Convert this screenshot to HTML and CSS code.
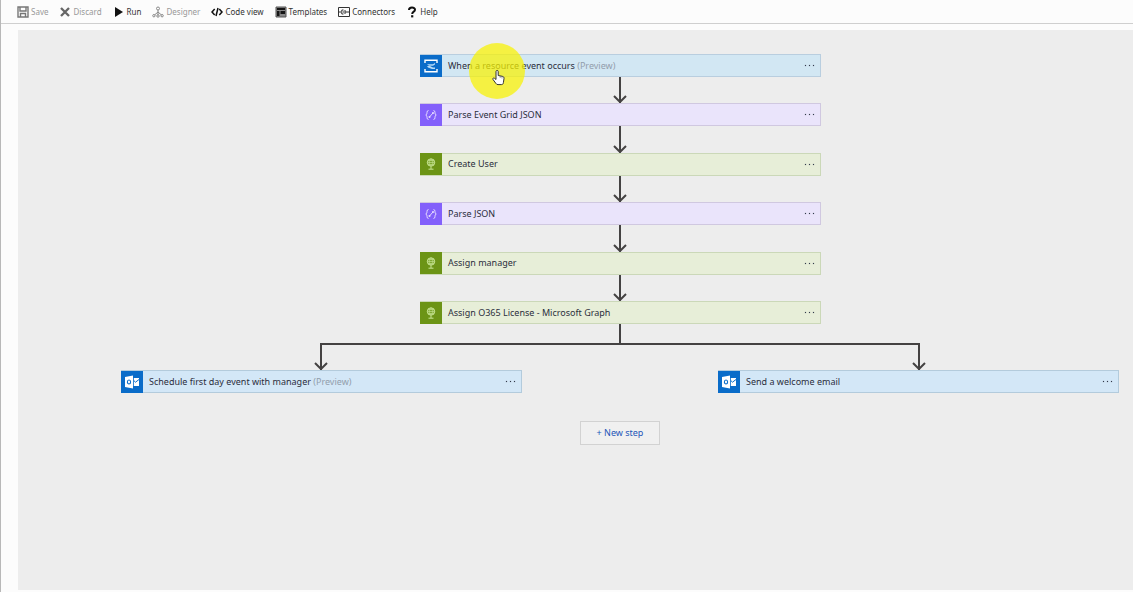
FILE: index.html
```html
<!DOCTYPE html>
<html lang="en">
<head>
<meta charset="utf-8">
<title>Logic app designer</title>
<link rel="stylesheet" href="styles.css">
</head>
<body>
<svg class="defs" aria-hidden="true">
  <symbol id="i-arrow" viewBox="0 0 14 8"><path d="M1 1l6 6 6-6" fill="none" stroke="#444242" stroke-width="2"/></symbol>
  <symbol id="i-event" viewBox="0 0 22 22"><g fill="none" stroke="#fff" stroke-width="1.4"><path d="M5 8V5.200h12V8M5 14v2.800h12V14"/></g><path d="M7 9.200h6l2-1.200v1.500l-2 1.200H9zM7 11h3l3 1.500h2V14h-3l-4-1.500z" fill="#b5d9f5"/></symbol>
  <symbol id="i-json" viewBox="0 0 22 22"><g fill="none" stroke="#e6dcff" stroke-width="1"><path d="M8.500 6.500C6 6.500 8 10 5.800 11 8 12 6 15.500 8.500 15.500M13.500 6.500c2.500 0 .5 3.500 2.700 4.500-2.200 1-.2 4.500-2.700 4.500M9.500 13l3.500-4"/></g><circle cx="9.500" cy="13" r="1" fill="#e6dcff"/><circle cx="13" cy="9" r="1" fill="#e6dcff"/></symbol>
  <symbol id="i-http" viewBox="0 0 22 22"><g fill="none" stroke="#c8e494" stroke-width="1"><circle cx="11" cy="9.500" r="3.700" fill="#7fa832"/><g stroke-width=".6"><path d="M7.300 9.500h7.400M8 7.500h6M8 11.500h6M11 5.800c-2.300 2.500-2.300 5 0 7.400 2.300-2.400 2.300-4.900 0-7.400"/></g><path d="M11 13.400v2.600M8.500 16.200h5"/></g></symbol>
  <symbol id="i-outlook" viewBox="0 0 22 22"><path d="M4 6l8-1.500v13L4 16z" fill="#fff"/><ellipse cx="8" cy="11" rx="1.600" ry="2" fill="none" stroke="#0a6cc9" stroke-width="1.100"/><path d="M12.800 7H18v8h-5.200z" fill="#fff"/><path d="M12.800 9.500l1.700 1.700L18 8.500" fill="none" stroke="#0a6cc9" stroke-width="1"/></symbol>
</svg>
<div class="app">
  <nav class="toolbar" aria-label="Designer commands">
    <button class="cmd save" disabled><svg class="ico" viewBox="0 0 12 12"><path d="M1 1h10v10H1zM3 1v4h6V1M3.500 11V7.500h5V11" fill="none" stroke="#777" stroke-width="1.400"/></svg>Save</button>
    <button class="cmd discard" disabled><svg class="ico" viewBox="0 0 12 12"><path d="M2 2l8 8M10 2l-8 8" stroke="#666" stroke-width="2.300"/></svg>Discard</button>
    <button class="cmd run"><svg class="ico" viewBox="0 0 12 12"><path d="M2 1l8 5-8 5z" fill="#111"/></svg>Run</button>
    <button class="cmd designer" disabled><svg class="ico" viewBox="0 0 12 12"><g fill="none" stroke="#888"><circle cx="6" cy="2.500" r="1.500"/><path d="M6 4v5M6 6L2.500 9M6 6l3.500 3"/><circle cx="1.900" cy="9.700" r="1.200"/><circle cx="6" cy="10" r="1.200"/><circle cx="10.100" cy="9.700" r="1.200"/></g></svg>Designer</button>
    <button class="cmd code"><svg class="ico" viewBox="0 0 12 12"><path d="M3.700 3L1 6l2.700 3M8.300 3L11 6 8.300 9M7 2L5 10" fill="none" stroke="#111" stroke-width="1.500"/></svg>Code view</button>
    <button class="cmd templates"><svg class="ico" viewBox="0 0 12 12"><path d="M1 1h10v10H1z" fill="#888" stroke="#555"/><path d="M2 2h8v2H2zM2 5h2.500v5H2zM5.500 5H10v3H5.500z" fill="#151515"/></svg>Templates</button>
    <button class="cmd connectors"><svg class="ico" viewBox="0 0 12 12"><g fill="none" stroke="#333"><path d="M.5 1.500h11v9H.5zM.5 6H3M9 6h2.500M5.500 4H3.800v4h1.700M6.500 4l2 2-2 2M5 6h3"/></g></svg>Connectors</button>
    <button class="cmd help"><svg class="ico" viewBox="0 0 12 12"><path d="M3 4C3 .8 9 .8 9 3.700 9 5.700 6.200 5.500 6.200 8" fill="none" stroke="#111" stroke-width="2"/><path d="M5.100 9.200h2.200v2.200H5.100z" fill="#111"/></svg>Help</button>
  </nav>
  <main class="canvas">
    <div class="trunk">
      <section class="card event"><svg class="tile"><use href="#i-event"/></svg><h2>When a resource event occurs <small>(Preview)</small></h2><button class="more" aria-label="More"><i></i><i></i><i></i></button>
        <svg class="pointer" viewBox="0 0 58 58" aria-hidden="true"><circle cx="29" cy="29" r="28" fill="#f8f200" fill-opacity=".72"/><path d="M28 29.500c0-1.500 2.200-1.500 2.200 0v4l4 .8c1.500.3 2 1 1.800 2.300l-.6 4c-.2 1.400-.8 2-2 2H30c-1 0-1.600-.4-2.200-1.300L25 37.500c-.7-1.200.7-2 1.600-1.200L28 37.500z" fill="#fff" stroke="#333" stroke-width="1"/><path d="M32.200 34v2M34 34.500v2" stroke="#666" stroke-width=".6"/></svg>
      </section>
      <div class="link"><svg class="head"><use href="#i-arrow"/></svg></div>
      <section class="card data"><svg class="tile"><use href="#i-json"/></svg><h2>Parse Event Grid JSON</h2><button class="more" aria-label="More"><i></i><i></i><i></i></button></section>
      <div class="link"><svg class="head"><use href="#i-arrow"/></svg></div>
      <section class="card http"><svg class="tile"><use href="#i-http"/></svg><h2>Create User</h2><button class="more" aria-label="More"><i></i><i></i><i></i></button></section>
      <div class="link"><svg class="head"><use href="#i-arrow"/></svg></div>
      <section class="card data"><svg class="tile"><use href="#i-json"/></svg><h2>Parse JSON</h2><button class="more" aria-label="More"><i></i><i></i><i></i></button></section>
      <div class="link"><svg class="head"><use href="#i-arrow"/></svg></div>
      <section class="card http"><svg class="tile"><use href="#i-http"/></svg><h2>Assign manager</h2><button class="more" aria-label="More"><i></i><i></i><i></i></button></section>
      <div class="link"><svg class="head"><use href="#i-arrow"/></svg></div>
      <section class="card http"><svg class="tile"><use href="#i-http"/></svg><h2>Assign O365 License - Microsoft Graph</h2><button class="more" aria-label="More"><i></i><i></i><i></i></button></section>
    </div>
    <div class="stem"></div>
    <div class="fork"><svg class="head"><use href="#i-arrow"/></svg><svg class="head"><use href="#i-arrow"/></svg></div>
    <div class="branches">
      <section class="card outlook"><svg class="tile"><use href="#i-outlook"/></svg><h2>Schedule first day event with manager <small>(Preview)</small></h2><button class="more" aria-label="More"><i></i><i></i><i></i></button></section>
      <section class="card outlook"><svg class="tile"><use href="#i-outlook"/></svg><h2>Send a welcome email</h2><button class="more" aria-label="More"><i></i><i></i><i></i></button></section>
    </div>
    <button class="new-step">+ New step</button>
  </main>
</div>
</body>
</html>
```
FILE: styles.css
```css
* { box-sizing: border-box; }
body { margin: 0; background: #fcfcfc; font-family: "Noto Sans", "Open Sans", sans-serif; }
button { border: 0; padding: 0; background: none; font: inherit; color: inherit; }
svg { display: block; flex: none; }
.defs { position: absolute; width: 0; height: 0; }
.app { display: flex; flex-direction: column; min-height: 100vh; padding-bottom: 2px; border-left: 1px solid #b8b8b8; }
.toolbar { display: flex; align-items: center; gap: 11px; height: 24px; padding-left: 16px; border-bottom: 1px solid #cfcfcf; font-size: 8px; color: #333; }
.cmd { display: flex; align-items: center; gap: 2px; line-height: 12px; white-space: nowrap; }
.cmd:disabled { color: #999; }
.ico { width: 12px; height: 12px; }
.canvas { flex: 1; display: flex; flex-direction: column; align-items: center; margin: 6px 0 0 17px; padding: 24px 14px 24px 103px; background: #ededed; }
.trunk { display: flex; flex-direction: column; width: 400px; min-height: 270px; }
.card { position: relative; display: flex; align-items: center; width: 401px; height: 23px; border: 1px solid; color: #2b2e3c; }
.card h2 { flex: 1; margin: 0 0 0 6px; font-size: 9px; font-weight: 400; line-height: 12px; white-space: nowrap; }
.card small { font-size: 9px; color: #929eac; }
.tile { width: 22px; height: 22px; margin-left: -1px; }
.event { background: #d2e7f3; border-color: #b9cedf; }
.event .tile, .outlook .tile { background: #0a6cc9; }
.outlook { background: #d3e7f7; border-color: #b3cbdc; }
.data { background: #eae4fb; border-color: #d0c8e0; }
.data .tile { background: #8360fb; }
.http { background: #e7eed8; border-color: #cbd8b8; }
.http .tile { background: #6c9416; }
.more { display: flex; align-items: center; gap: 3px; height: 12px; margin-right: 6px; }
.more i { width: 1px; height: 1px; background: #333b4a; box-shadow: 0 0 1px #333b4a; }
.link { flex: 1; display: flex; justify-content: center; align-items: flex-end; background: linear-gradient(#444242, #444242) center / 2px 100% no-repeat; }
.head { width: 14px; height: 8px; }
.stem { width: 2px; height: 19px; background: #444242; }
.fork { align-self: stretch; display: flex; justify-content: space-between; align-items: flex-end; height: 27px; margin: 0 199px; border: 2px solid #444242; border-bottom: 0; }
.fork .head { margin: 0 -8px; }
.branches { align-self: stretch; display: flex; justify-content: space-between; }
.new-step { margin-top: 28px; padding: 5px 16px; border: 1px solid #d2d2d2; background: #f0f0f0; color: #2456b8; font-size: 9px; line-height: 12px; }
.pointer { position: absolute; left: 47px; top: -13px; width: 58px; height: 58px; }
```
